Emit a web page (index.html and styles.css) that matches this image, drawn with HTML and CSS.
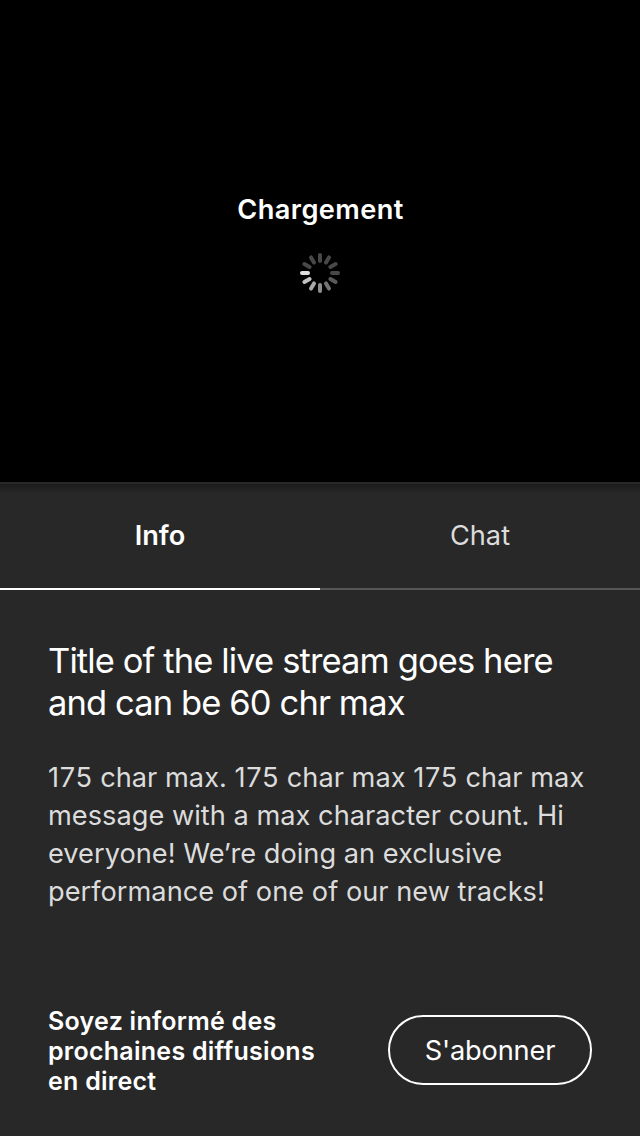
FILE: index.html
```html
<!DOCTYPE html>
<html lang="fr">
<head>
<meta charset="utf-8">
<title>Live</title>
<link rel="stylesheet" href="styles.css">
</head>
<body>
<main class="screen">
  <section class="player">
    <p class="player-label">Chargement</p>
    <svg class="spinner" viewBox="-20 -20 40 40" fill="none" stroke-width="4" stroke-linecap="round">
      <path stroke="#484848" d="M0-12V-18M6-10.4L9-15.6M10.4-6L15.6-9M12 0H18"/>
      <path stroke="#484848" d="M-6-10.4L-9-15.6M-10.4-6L-15.6-9"/>
      <path stroke="#5a5a5a" d="M10.4 6L15.6 9"/>
      <path stroke="#747474" d="M6 10.4L9 15.6"/>
      <path stroke="#8e8e8e" d="M0 12V18"/>
      <path stroke="#a9a9a9" d="M-6 10.4L-9 15.6"/>
      <path stroke="#c2c2c2" d="M-10.4 6L-15.6 9"/>
      <path stroke="#dedede" d="M-12 0H-18"/>
    </svg>
  </section>
  <nav class="tabs">
    <a class="tab tab-active">Info</a>
    <a class="tab">Chat</a>
  </nav>
  <section class="info">
    <h1 class="title">Title of the live stream goes here<br>and can be 60 chr max</h1>
    <p class="message"><span class="number">175</span> char max. <span class="number">175</span> char max <span class="number">175</span> char max<br>message with a max character count. Hi<br>everyone! We’re doing an exclusive<br>performance of one of our new tracks!</p>
  </section>
  <footer class="subscribe">
    <p class="subscribe-text">Soyez informé des<br>prochaines diffusions<br>en direct</p>
    <button class="subscribe-button">S'abonner</button>
  </footer>
</main>
</body>
</html>
```
FILE: styles.css
```css
* { box-sizing: border-box; margin: 0; }
body {
  background: #282828;
  color: #fff;
  font-family: Inter, "Liberation Sans", sans-serif;
  font-size: 27.2px;
}
.screen { display: flex; flex-direction: column; height: 1136px; }
.player {
  display: flex;
  flex-direction: column;
  align-items: center;
  height: 482px;
  padding-top: 193px;
  background: #000;
}
.player-label { padding-left: 1px; font-weight: 600; letter-spacing: .42px; line-height: 34px; white-space: nowrap; }
.spinner { width: 40px; height: 40px; margin-top: 26px; }
.tabs {
  display: grid;
  grid-template-columns: 1fr 1fr;
  height: 108px;
  border-top: 2px solid #282828;
  background: linear-gradient(#1b1b1b, #282828 10px) padding-box;
}
.tab {
  padding-top: 35px;
  border-bottom: 2px solid #555;
  color: #dcdcdc;
  line-height: 34px;
  text-align: center;
}
.tab-active { border-color: #fff; color: #fff; font-weight: 600; }
.info { padding: 50px 48px 0; white-space: nowrap; }
.title { font-size: 34.5px; font-weight: 400; letter-spacing: -.88px; line-height: 42px; }
.message { margin-top: 35px; color: #dcdcdc; letter-spacing: .02px; line-height: 38px; }
.number { letter-spacing: .6px; }
.subscribe {
  display: flex;
  justify-content: space-between;
  align-items: flex-start;
  margin-top: auto;
  padding: 0 48px 40px;
}
.subscribe-text { font-size: 25px; font-weight: 600; letter-spacing: .26px; line-height: 30px; white-space: nowrap; }
.subscribe-button {
  width: 204px;
  height: 70px;
  margin-top: 9px;
  padding: 0;
  border: 2px solid #fff;
  border-radius: 35px;
  background: none;
  color: #fff;
  font: inherit;
  letter-spacing: -.18px;
}
```
